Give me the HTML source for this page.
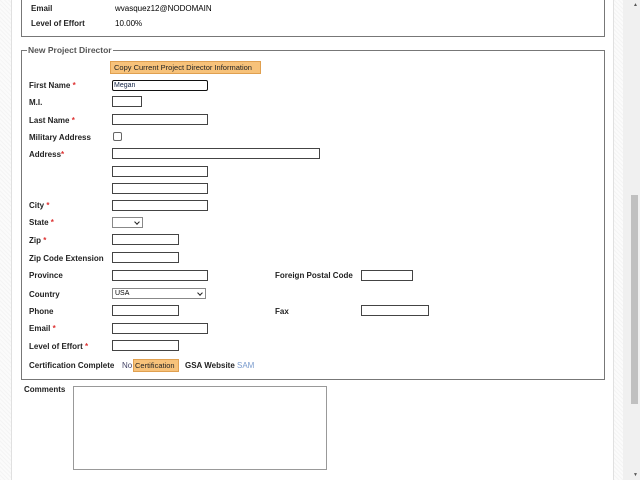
<!DOCTYPE html>
<html><head><meta charset="utf-8"><style>
*{margin:0;padding:0;box-sizing:border-box}
body{width:640px;height:480px;overflow:hidden;position:relative;background:#fff;font-family:"Liberation Sans",Verdana,sans-serif;font-size:8px;color:#000}
.strip{position:absolute;top:0;height:480px;background:repeating-linear-gradient(45deg,#f4f4f4 0 1px,#fbfbfb 1px 3px)}
.a{position:absolute;white-space:nowrap}
.l{position:absolute;font-weight:bold;font-size:8px;white-space:nowrap;color:#222}
.r{color:#d33}
.i{position:absolute;height:11px;border:1px solid #444;background:#fff}
.box{position:absolute;border:1px solid #777}
.ar{position:absolute;right:3px;top:2px;width:4px;height:4px;border-right:1.5px solid #222;border-bottom:1.5px solid #222;transform:rotate(45deg)}
</style></head><body>
<div class="strip" style="left:0;width:12px;border-right:1px solid #e0e0e0"></div>
<div class="strip" style="left:613px;width:10px;border-left:1px solid #e0e0e0"></div>
<div style="position:absolute;left:623px;top:0;width:17px;height:480px;background:#f0f0f0"></div>
<div style="position:absolute;left:631px;top:195px;width:7px;height:209px;background:#c0c0c0"></div>
<div class="a" style="left:633px;top:2px;font-size:5px;color:#555">▲</div>
<div class="a" style="left:633px;top:472px;font-size:5px;color:#555">▼</div>

<div class="box" style="left:21px;top:-2px;width:584px;height:39px;border-top:none"></div>
<div class="l" style="left:31px;top:4px">Email</div>
<div class="a" style="left:115px;top:4px">wvasquez12@NODOMAIN</div>
<div class="l" style="left:31px;top:19px">Level of Effort</div>
<div class="a" style="left:115px;top:19px">10.00%</div>

<div class="box" style="left:21px;top:50px;width:584px;height:330px"></div>
<div class="l" style="left:27px;top:45px;background:#fff;padding:0 1px;color:#555;font-size:8.5px">New Project Director</div>
<div class="a" style="left:110px;top:61px;width:151px;height:13px;background:#f7c27a;border:1px solid #e0a050;font-size:7.5px;line-height:11px;padding-left:3px;color:#222">Copy Current Project Director Information</div>

<div class="l" style="left:29px;top:81px">First Name <span class="r">*</span></div>
<div class="i" style="left:112px;top:80px;width:96px;border-radius:2px;border-color:#111;font-size:7px;line-height:9px;padding-left:1px;color:#124">Megan</div>
<div class="l" style="left:29px;top:98px">M.I.</div>
<div class="i" style="left:112px;top:96px;width:30px"></div>
<div class="l" style="left:29px;top:116px">Last Name <span class="r">*</span></div>
<div class="i" style="left:112px;top:114px;width:96px"></div>
<div class="l" style="left:29px;top:133px">Military Address</div>
<div class="i" style="left:113px;top:132px;width:9px;height:9px;border-radius:2px;border-color:#666"></div>
<div class="l" style="left:29px;top:150px">Address<span class="r">*</span></div>
<div class="i" style="left:112px;top:148px;width:208px"></div>
<div class="i" style="left:112px;top:166px;width:96px"></div>
<div class="i" style="left:112px;top:183px;width:96px"></div>
<div class="l" style="left:29px;top:201px">City <span class="r">*</span></div>
<div class="i" style="left:112px;top:200px;width:96px"></div>
<div class="l" style="left:29px;top:218px">State <span class="r">*</span></div>
<div class="i" style="left:112px;top:217px;width:31px;border-color:#888"><div class="ar"></div></div>
<div class="l" style="left:29px;top:236px">Zip <span class="r">*</span></div>
<div class="i" style="left:112px;top:234px;width:67px"></div>
<div class="l" style="left:29px;top:254px">Zip Code Extension</div>
<div class="i" style="left:112px;top:252px;width:67px"></div>
<div class="l" style="left:29px;top:271px">Province</div>
<div class="i" style="left:112px;top:270px;width:96px"></div>
<div class="l" style="left:275px;top:271px">Foreign Postal Code</div>
<div class="i" style="left:361px;top:270px;width:52px"></div>
<div class="l" style="left:29px;top:290px">Country</div>
<div class="i" style="left:112px;top:288px;width:94px;height:11px;border-color:#888;font-size:7px;line-height:9px;padding-left:2px">USA<div class="ar"></div></div>
<div class="l" style="left:29px;top:307px">Phone</div>
<div class="i" style="left:112px;top:305px;width:67px"></div>
<div class="l" style="left:275px;top:307px">Fax</div>
<div class="i" style="left:361px;top:305px;width:68px"></div>
<div class="l" style="left:29px;top:324px">Email <span class="r">*</span></div>
<div class="i" style="left:112px;top:323px;width:96px"></div>
<div class="l" style="left:29px;top:342px">Level of Effort <span class="r">*</span></div>
<div class="i" style="left:112px;top:340px;width:67px"></div>
<div class="l" style="left:29px;top:361px">Certification Complete</div>
<div class="a" style="left:122px;top:361px;color:#446">No</div>
<div class="a" style="left:133px;top:359px;width:46px;height:13px;background:#f7c27a;border:1px solid #e0a050;font-size:7.5px;line-height:11px;padding-left:1px;color:#222">Certification</div>
<div class="l" style="left:185px;top:361px">GSA Website</div>
<div class="a" style="left:237px;top:361px;color:#79c">SAM</div>

<div class="l" style="left:24px;top:385px">Comments</div>
<div class="i" style="left:73px;top:386px;width:254px;height:84px;border-color:#999"></div>
</body></html>
